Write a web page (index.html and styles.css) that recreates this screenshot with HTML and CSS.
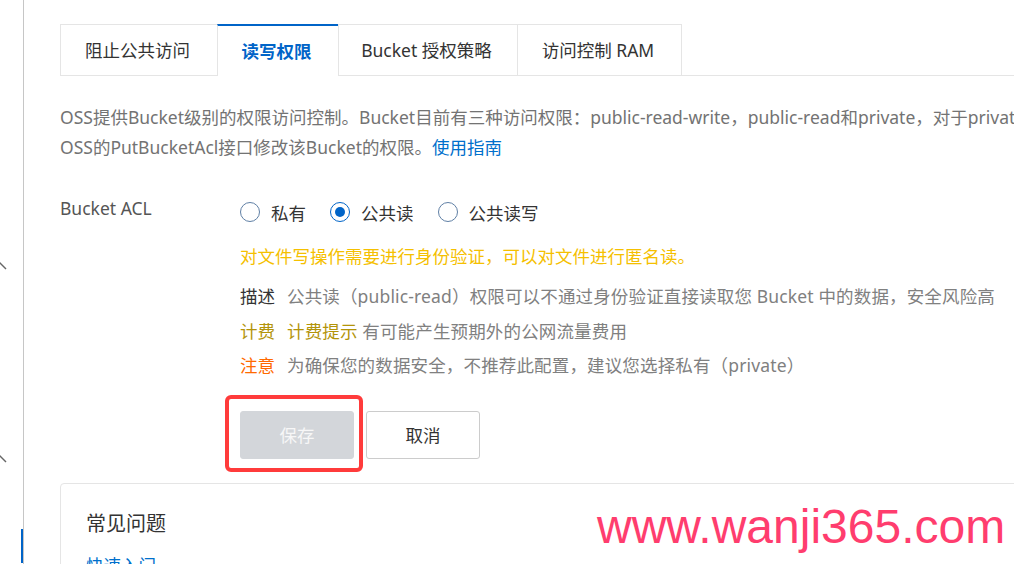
FILE: index.html
```html
<!DOCTYPE html>
<html lang="zh-CN">
  <head>
    <meta charset="UTF-8" />
    <title>读写权限</title>
    <link rel="stylesheet" href="styles.css">
  </head>
  <body>
    <div class="sidebar">
      <svg class="chevron first" width="8" height="10" viewBox="0 0 8 10"><path d="M0 1 L7 8" stroke="#666" stroke-width="1.4" fill="none"/></svg>
      <svg class="chevron second" width="8" height="10" viewBox="0 0 8 10"><path d="M0 1 L7 8" stroke="#666" stroke-width="1.4" fill="none"/></svg>
      <div class="menu-active"></div>
    </div>

    <div class="main">
      <div class="tab-bar">
        <div class="tab tab-block">阻止公共访问</div>
        <div class="tab tab-acl active">读写权限</div>
        <div class="tab tab-policy">Bucket 授权策略</div>
        <div class="tab tab-ram">访问控制 RAM</div>
      </div>

      <p class="intro">
        OSS提供Bucket级别的权限访问控制。Bucket目前有三种访问权限：public-read-write，public-read和private，对于private类型的Bucket，您可以通过<br>
        OSS的PutBucketAcl接口修改该Bucket的权限。<a href="#">使用指南</a>
      </p>

      <div class="form-row">
        <div class="form-label">Bucket ACL</div>
        <div class="form-control">
          <div class="radio-group">
            <label class="radio"><span class="radio-dot"></span>私有</label>
            <label class="radio checked"><span class="radio-dot"></span>公共读</label>
            <label class="radio"><span class="radio-dot"></span>公共读写</label>
          </div>
          <div class="warning">对文件写操作需要进行身份验证，可以对文件进行匿名读。</div>
          <div class="info-line">
            <span class="info-key">描述</span>
            <span class="info-value">公共读（public-read）权限可以不通过身份验证直接读取您 Bucket 中的数据，安全风险高</span>
          </div>
          <div class="info-line">
            <span class="info-key fee">计费</span>
            <span class="info-value"><span class="fee">计费提示</span> 有可能产生预期外的公网流量费用</span>
          </div>
          <div class="info-line">
            <span class="info-key notice">注意</span>
            <span class="info-value">为确保您的数据安全，不推荐此配置，建议您选择私有（private）</span>
          </div>
          <div class="actions">
            <div class="mark"></div>
            <button class="btn primary" disabled>保存</button>
            <button class="btn">取消</button>
          </div>
        </div>
      </div>

      <div class="faq">
        <h3>常见问题</h3>
        <a href="#" class="faq-link">快速入门</a>
      </div>
    </div>

    <div class="watermark">www.wanji365.com</div>
  </body>
</html>
```

FILE: styles.css
```css
body {
  margin: 0;
  height: 564px;
  overflow: hidden;
  display: flex;
  font-family: 'Noto Sans', 'Noto Sans CJK SC', sans-serif;
  font-size: 17.5px;
  color: #333;
  background-color: #fff;
  position: relative;
}

.sidebar {
  width: 23px;
  flex-shrink: 0;
  border-right: 1px solid #c6c6c6;
  display: flex;
  flex-direction: column;
}

.chevron {
  display: block;
  margin-left: -1px;
}

.chevron.first {
  margin-top: 261px;
}

.chevron.second {
  margin-top: 183px;
}

.menu-active {
  margin-top: 65px;
  width: 23px;
  height: 34px;
  box-sizing: border-box;
  border-right: 2px solid #0064c8;
}

.main {
  flex: 1;
  min-width: 0;
  padding: 24px 0 0 36px;
}

.tab-bar {
  display: flex;
  border-bottom: 1px solid #e5e5e5;
  width: 1100px;
}

.tab {
  height: 51px;
  box-sizing: border-box;
  display: flex;
  align-items: center;
  justify-content: center;
  border: 1px solid #e5e5e5;
  border-bottom: none;
  margin-left: -1px;
  padding: 0 3px 1px 0;
  color: #333;
  white-space: nowrap;
}

.tab:first-child {
  margin-left: 0;
}

.tab-block {
  width: 158px;
}

.tab-acl {
  width: 122px;
}

.tab-policy {
  width: 180px;
}

.tab-ram {
  width: 165px;
}

.tab.active {
  border-top: 2px solid #0064c8;
  color: #0064c8;
  font-weight: 700;
  height: 52px;
  margin-bottom: -1px;
  background-color: #fff;
}

.intro {
  margin: 26px 0 0;
  line-height: 30px;
  color: #737373;
  white-space: nowrap;
  overflow: hidden;
}

.intro a {
  color: #0070cc;
  text-decoration: none;
}

.form-row {
  display: flex;
  margin-top: 36px;
}

.form-label {
  width: 180px;
  flex-shrink: 0;
  line-height: 20px;
  color: #555;
}

.radio-group {
  display: flex;
  gap: 24px;
  height: 28px;
  align-items: center;
}

.radio {
  display: flex;
  align-items: center;
  gap: 11px;
  color: #333;
}

.radio-dot {
  width: 20px;
  height: 20px;
  box-sizing: border-box;
  border: 1px solid #5f7fa5;
  border-radius: 50%;
  position: relative;
}

.radio.checked .radio-dot {
  border-color: #0064c8;
}

.radio.checked .radio-dot::after {
  content: "";
  position: absolute;
  left: 4px;
  top: 4px;
  width: 10px;
  height: 10px;
  border-radius: 50%;
  background-color: #0064c8;
}

.warning {
  margin-top: 15px;
  line-height: 30px;
  color: #f5c000;
}

.info-line {
  display: flex;
  gap: 12px;
  line-height: 34.5px;
  white-space: nowrap;
}

.warning + .info-line {
  margin-top: 8px;
}

.info-key {
  color: #333;
}

.info-value {
  color: #808080;
  letter-spacing: 0.15px;
}

.fee {
  color: #b3940a;
}

.notice {
  color: #ff6a00;
}

.actions {
  position: relative;
  display: flex;
  gap: 12px;
  margin-top: 28px;
}

.btn {
  width: 114px;
  height: 48px;
  border: 1px solid #cccccc;
  border-radius: 3px;
  background-color: #fff;
  color: #333;
  font-family: inherit;
  font-size: 17.5px;
}

.btn.primary {
  border-color: #d3d6da;
  background-color: #d3d6da;
  color: #f7f7f7;
}

.mark {
  position: absolute;
  left: -15px;
  top: -16px;
  width: 138px;
  height: 77px;
  box-sizing: border-box;
  border: 4px solid #ff3b3b;
  border-radius: 6px;
}

.faq {
  margin-top: 24px;
  width: 953px;
  border: 1px solid #e5e5e5;
  border-radius: 4px;
  padding: 26px 25px 20px;
}

.faq h3 {
  margin: 0;
  font-size: 20px;
  font-weight: 400;
  line-height: 28px;
  color: #333;
}

.faq-link {
  display: block;
  margin-top: 12px;
  line-height: 30px;
  color: #0070cc;
  text-decoration: none;
}

.watermark {
  position: absolute;
  left: 597px;
  top: 499px;
  font-family: 'Liberation Sans', Arial, sans-serif;
  font-size: 48px;
  line-height: 56px;
  color: #ff3d6e;
}
```
